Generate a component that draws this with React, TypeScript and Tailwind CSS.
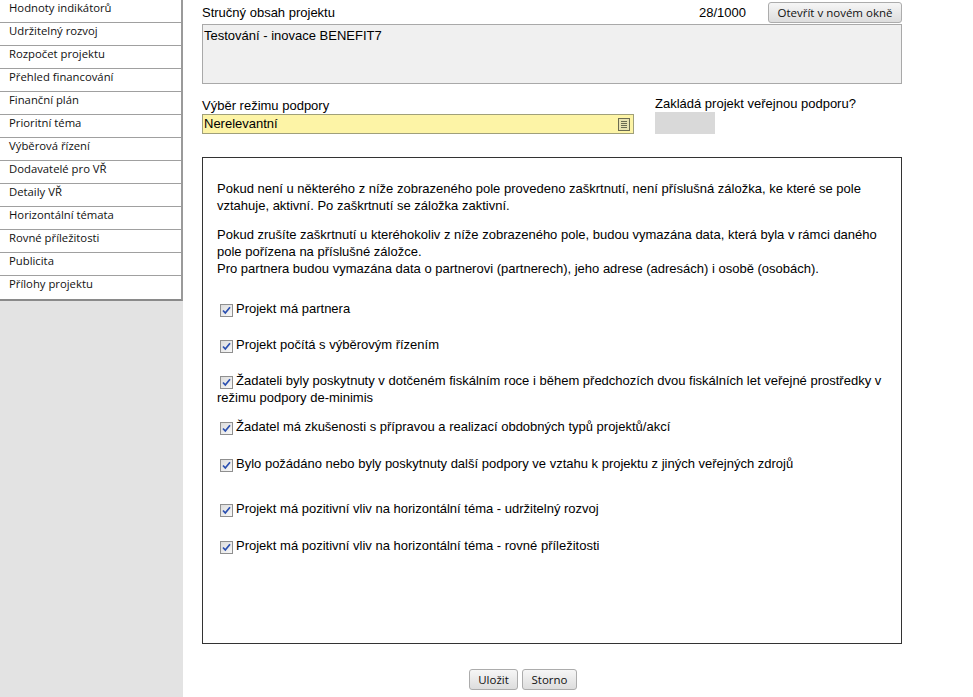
import React from 'react';

const menuItems = [
    'Hodnoty indikátorů',
    'Udržitelný rozvoj',
    'Rozpočet projektu',
    'Přehled financování',
    'Finanční plán',
    'Prioritní téma',
    'Výběrová řízení',
    'Dodavatelé pro VŘ',
    'Detaily VŘ',
    'Horizontální témata',
    'Rovné příležitosti',
    'Publicita',
    'Přílohy projektu',
];

const checks = [
    { text: 'Projekt má partnera', mt: 'mt-0' },
    { text: 'Projekt počítá s výběrovým řízením', mt: 'mt-[19px]' },
    {
        text: 'Žadateli byly poskytnuty v dotčeném fiskálním roce i během předchozích dvou fiskálních let veřejné prostředky v režimu podpory de-minimis',
        mt: 'mt-[19px]',
    },
    { text: 'Žadatel má zkušenosti s přípravou a realizací obdobných typů projektů/akcí', mt: 'mt-[12px]' },
    { text: 'Bylo požádáno nebo byly poskytnuty další podpory ve vztahu k projektu z jiných veřejných zdrojů', mt: 'mt-[20px]' },
    { text: 'Projekt má pozitivní vliv na horizontální téma - udržitelný rozvoj', mt: 'mt-[28px]' },
    { text: 'Projekt má pozitivní vliv na horizontální téma - rovné příležitosti', mt: 'mt-[20px]' },
];

function CheckBox() {
    return (
        <span className="inline-flex w-[13px] h-[13px] mr-[3px] align-[-2px] border border-[#8f8f8f] bg-gradient-to-br from-[#dcdcdc] to-[#f8f8f8] items-center justify-center">
            <svg width="9" height="9" viewBox="0 0 9 9">
                <path d="M1 4.5 L3.3 7 L8 1.2" fill="none" stroke="#2a4fb0" strokeWidth="1.7" />
            </svg>
        </span>
    );
}

function GrayButton({ children, className = '' }: { children: React.ReactNode; className?: string }) {
    return (
        <button
            type="button"
            className={`h-[21px] border border-[#acacac] rounded-[3px] bg-gradient-to-b from-[#f6f6f6] to-[#dddddd] text-[11.5px] text-[#111] font-['Open_Sans',sans-serif] leading-none whitespace-nowrap ${className}`}
        >
            {children}
        </button>
    );
}

export default function App() {
    return (
        <div className="flex w-[973px] h-[697px] bg-white font-['Liberation_Sans',Arial,sans-serif] text-[13px] text-black overflow-hidden">
            {/* Side menu */}
            <div className="w-[183px] shrink-0 bg-[#e3e3e3] self-stretch">
                <div className="bg-white border-r-[2px] border-[#9a9a9a] border-b-[2px] border-b-[#8a8a8a]">
                    {menuItems.map((item, i) => (
                        <div
                            key={item}
                            className={`h-[23px] pl-[9px] flex items-center font-['Open_Sans',sans-serif] text-[11.3px] text-[#111] ${i < menuItems.length - 1 ? 'border-b border-[#a0a0a0]' : ''}`}
                        >
                            <span className="-mt-[6px]">{item}</span>
                        </div>
                    ))}
                </div>
            </div>

            {/* Content */}
            <div className="flex-1 pl-[19px] pt-[2px]">
                <div className="w-[700px]">
                    <div className="flex items-center h-[21px]">
                        <span className="flex-1">Stručný obsah projektu</span>
                        <span className="mr-[22px]">28/1000</span>
                        <GrayButton className="w-[134px]">Otevřít v novém okně</GrayButton>
                    </div>
                    <div className="mt-[1px] h-[60px] border border-[#a9a9a9] bg-[#f0f0f0] px-[1px] pt-[1px]">
                        Testování - inovace BENEFIT7
                    </div>

                    <div className="mt-[14px] flex">
                        <div className="w-[432px]">
                            <div className="leading-[16px]">Výběr režimu podpory</div>
                            <div className="h-[20px] border border-[#a0a07a] bg-[#fdf4a6] flex items-center pl-[1px] pr-[3px]">
                                <span className="flex-1">Nerelevantní</span>
                                <svg width="12" height="13" viewBox="0 0 12 13">
                                    <rect x="0.5" y="0.5" width="11" height="12" fill="#e8e2b0" stroke="#6b6b50" />
                                    <line x1="3" y1="3.5" x2="9" y2="3.5" stroke="#6b6b50" />
                                    <line x1="3" y1="5.5" x2="9" y2="5.5" stroke="#6b6b50" />
                                    <line x1="3" y1="7.5" x2="9" y2="7.5" stroke="#6b6b50" />
                                    <line x1="3" y1="9.5" x2="9" y2="9.5" stroke="#6b6b50" />
                                </svg>
                            </div>
                        </div>
                        <div className="ml-[21px] -mt-[2px]">
                            <div className="leading-[16px]">Zakládá projekt veřejnou podporu?</div>
                            <div className="w-[60px] h-[22px] bg-[#d9d9d9]" />
                        </div>
                    </div>

                    {/* Checkbox panel */}
                    <div className="mt-[23px] h-[487px] border border-[#333] pl-[14px] pr-[10px] pt-[22px] leading-[17px]">
                        <p>
                            Pokud není u některého z níže zobrazeného pole provedeno zaškrtnutí, není příslušná záložka, ke které se pole
                            vztahuje, aktivní. Po zaškrtnutí se záložka zaktivní.
                        </p>
                        <p className="mt-[12px]">
                            Pokud zrušíte zaškrtnutí u kteréhokoliv z níže zobrazeného pole, budou vymazána data, která byla v rámci daného
                            pole pořízena na příslušné záložce.
                            <br />
                            Pro partnera budou vymazána data o partnerovi (partnerech), jeho adrese (adresách) i osobě (osobách).
                        </p>
                        <div className="mt-[23px]">
                            {checks.map((c) => (
                                <div key={c.text} className={c.mt}>
                                    <span className="ml-[3px]">
                                        <CheckBox />
                                    </span>
                                    {c.text}
                                </div>
                            ))}
                        </div>
                    </div>

                    <div className="mt-[25px] flex gap-[4px] pl-[267px]">
                        <GrayButton className="w-[49px]">Uložit</GrayButton>
                        <GrayButton className="w-[55px]">Storno</GrayButton>
                    </div>
                </div>
            </div>
        </div>
    );
}
